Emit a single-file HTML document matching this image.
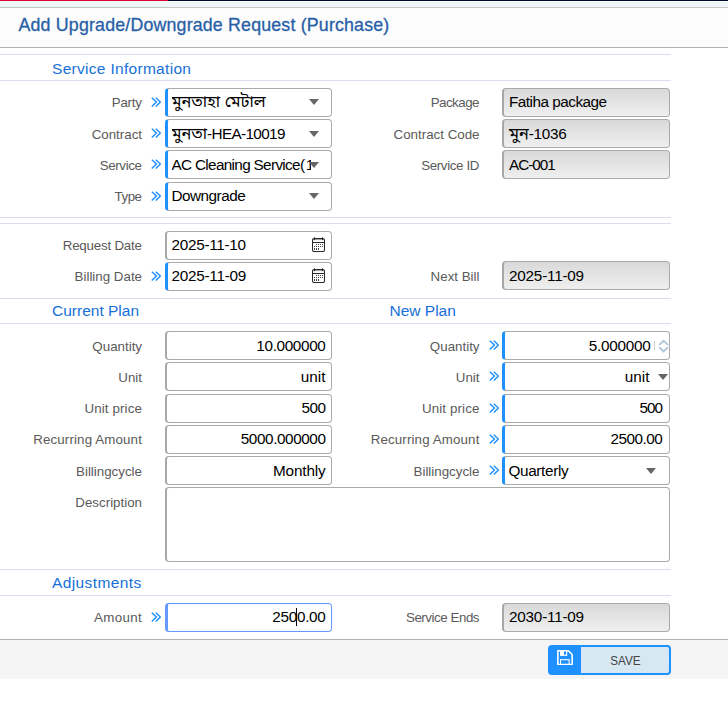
<!DOCTYPE html>
<html lang="en"><head><meta charset="utf-8"><title>Add Upgrade/Downgrade Request (Purchase)</title>
<style>
*{box-sizing:border-box;margin:0;padding:0}
html,body{width:728px;height:721px;background:#fff;overflow:hidden}
body{position:relative;font-family:"Liberation Sans", "Noto Sans Bengali", "FreeSans", sans-serif;color:#000}
.abs{position:absolute}
.hl{position:absolute;left:0;width:671px;height:1px;background:#dcdcf0}
.lbl{position:absolute;font-size:13.33px;color:#5a5a5a;text-align:right;white-space:nowrap;height:28.75px;line-height:28.75px}
.lbl.l{left:0;width:142px}
.lbl.r{left:340px;width:139.5px}
.sec{position:absolute;font-size:15.5px;color:#1670d8;white-space:nowrap;line-height:20px;height:20px}
.box{position:absolute;height:29px;border:1px solid #aaa;border-radius:3.75px;background:#fff;font-size:15.3px;line-height:25.6px;white-space:nowrap;overflow:hidden;padding:0 5.5px 0 4.5px;border-left:2px solid #a8a8a8}
.box.l{left:165px;width:167px}
.box.r{left:502px;width:168px}
.box.req{border-left:3px solid #1e90ff;padding-left:3.5px}
.box.ro{background:linear-gradient(#d9d9d9,#efefef);padding-left:5px}
.box.num{text-align:right}
.box.r.num{padding-right:6.8px}
.box.focus{border-color:#6699ff;border-left-color:#6699ff}
.chev{position:absolute;width:10.2px;height:10.2px}
.tri{position:absolute;width:0;height:0;border-left:5.3px solid transparent;border-right:5.3px solid transparent;border-top:6px solid #666}
.bn{font-family:"Liberation Sans","Noto Sans Bengali","Lohit Bengali","FreeSans",sans-serif;font-size:16.3px;line-height:1;position:relative;top:-0.5px}
.sel{display:block;width:139.5px;overflow:hidden;white-space:nowrap}
.cal{position:absolute;width:13px;height:15px}
</style></head>
<body>
<div class="abs" style="left:0;top:0;width:168px;height:1px;background:#e00030"></div>
<div class="abs" style="left:168px;top:0;width:560px;height:1px;background:#000a2a"></div>
<div class="abs" style="left:0;top:1px;width:728px;height:6px;background:#eef6f9"></div>
<div class="abs" style="left:168px;top:1px;width:560px;height:1px;background:#fdfeff"></div>
<div class="abs" style="left:0;top:7px;width:728px;height:1px;background:#c6c6c6"></div>
<div class="abs" style="left:0;top:8px;width:728px;height:39px;background:#fcfcfc"></div>
<div class="abs" style="left:18.5px;top:12px;font-size:17.8px;letter-spacing:0.18px;line-height:26px;color:#2760a6;white-space:nowrap;-webkit-text-stroke:0.3px #2760a6" id="title">Add Upgrade/Downgrade Request (Purchase)</div>
<div class="abs" style="left:0;top:47px;width:728px;height:1px;background:#b2b2b2"></div>
<div class="hl" style="top:54px"></div>
<div class="hl" style="top:80px"></div>
<div class="hl" style="top:217px"></div>
<div class="hl" style="top:223px"></div>
<div class="hl" style="top:298px"></div>
<div class="hl" style="top:323px"></div>
<div class="hl" style="top:569px"></div>
<div class="hl" style="top:595px"></div>
<div class="sec" id="s1" style="left:52px;top:58.5px;letter-spacing:0.3px">Service Information</div>
<div class="sec" id="s2" style="left:52px;top:301.3px;letter-spacing:0px">Current Plan</div>
<div class="sec" id="s3" style="left:389.5px;top:301.3px;letter-spacing:0px">New Plan</div>
<div class="sec" id="s4" style="left:52px;top:573.3px;letter-spacing:0.4px">Adjustments</div>
<div class="lbl l" style="top:89.0px;letter-spacing:-0.2px;padding-right:0.2px">Party</div>
<svg class="chev" style="left:151.0px;top:96.5px" viewBox="0 0 10.2 10.2"><path d="M0.8 0.7 L5.4 5.1 L0.8 9.5 M4.8 0.7 L9.4 5.1 L4.8 9.5" fill="none" stroke="#1e90ff" stroke-width="1.45"/></svg>
<div class="box l req" style="top:88px"><span class="sel"><span class="bn">মুনতাহা মেটাল</span></span></div>
<div class="tri" style="left:308.7px;top:99.4px"></div>
<div class="lbl l" style="top:121.0px;letter-spacing:0px;padding-right:0px">Contract</div>
<svg class="chev" style="left:151.0px;top:127.5px" viewBox="0 0 10.2 10.2"><path d="M0.8 0.7 L5.4 5.1 L0.8 9.5 M4.8 0.7 L9.4 5.1 L4.8 9.5" fill="none" stroke="#1e90ff" stroke-width="1.45"/></svg>
<div class="box l req" style="padding-top:1px;top:119px"><span class="sel"><span class="bn">মুনতা</span><span style="letter-spacing:-0.65px">-HEA-10019</span></span></div>
<div class="tri" style="left:308.7px;top:131.20000000000002px"></div>
<div class="lbl l" style="top:152.0px;letter-spacing:-0.35px;padding-right:0.35px">Service</div>
<svg class="chev" style="left:151.0px;top:158.5px" viewBox="0 0 10.2 10.2"><path d="M0.8 0.7 L5.4 5.1 L0.8 9.5 M4.8 0.7 L9.4 5.1 L4.8 9.5" fill="none" stroke="#1e90ff" stroke-width="1.45"/></svg>
<div class="box l req" style="padding-top:1px;top:150px"><span class="sel"><span style="letter-spacing:-0.67px">AC Cleaning Service(</span><span style="margin-left:1.5px">1</span></span></div>
<div class="tri" style="left:308.7px;top:162.20000000000002px"></div>
<div class="lbl l" style="top:183.0px;letter-spacing:-0.5px;padding-right:0.5px">Type</div>
<svg class="chev" style="left:151.0px;top:190.5px" viewBox="0 0 10.2 10.2"><path d="M0.8 0.7 L5.4 5.1 L0.8 9.5 M4.8 0.7 L9.4 5.1 L4.8 9.5" fill="none" stroke="#1e90ff" stroke-width="1.45"/></svg>
<div class="box l req" style="top:182px"><span style="letter-spacing:-0.5px">Downgrade</span></div>
<div class="tri" style="left:308.7px;top:193.4px"></div>
<div class="lbl r" style="top:89.0px;letter-spacing:-0.5px;padding-right:0.5px">Package</div>
<div class="box r ro" style="top:88px"><span style="letter-spacing:-0.5px">Fatiha package</span></div>
<div class="lbl r" style="top:121.0px;letter-spacing:0px;padding-right:0px">Contract Code</div>
<div class="box r ro" style="padding-top:1px;top:119px"><span class="bn">মুন</span><span style="letter-spacing:-0.3px">-1036</span></div>
<div class="lbl r" style="top:152.0px;letter-spacing:-0.35px;padding-right:0.35px">Service ID</div>
<div class="box r ro" style="padding-top:1px;top:150px"><span style="letter-spacing:-1.0px">AC-001</span></div>
<div class="lbl l" style="top:232.0px;letter-spacing:-0.2px;padding-right:0.2px">Request Date</div>
<div class="box l " style="top:231px"><span style="letter-spacing:-0.28px">2025-11-10</span></div>
<svg class="cal" style="left:312px;top:237px" viewBox="0 0 13 15"><rect x="0.5" y="1.5" width="12" height="13" rx="1.6" fill="none" stroke="#2a2a2a" stroke-width="1.05"/><path d="M0.5 5.5H12.5" stroke="#2a2a2a" stroke-width="1"/><path d="M1 2.6H12" stroke="#2a2a2a" stroke-width="0.5"/><g fill="#222"><rect x="2" y="0" width="1" height="3.2" rx="0.4"/><rect x="10" y="0" width="1" height="3.2" rx="0.4"/></g><g fill="#444"><rect x="4" y="7" width="1" height="1"/><rect x="6" y="7" width="1" height="1"/><rect x="8" y="7" width="1" height="1"/><rect x="10" y="7" width="1" height="1"/><rect x="2" y="9" width="1" height="1"/><rect x="4" y="9" width="1" height="1"/><rect x="6" y="9" width="1" height="1"/><rect x="8" y="9" width="1" height="1"/><rect x="10" y="9" width="1" height="1"/><rect x="2" y="11" width="1" height="2"/><rect x="4" y="11" width="1" height="2"/><rect x="6" y="11" width="1" height="2"/></g></svg>
<div class="lbl l" style="top:263.0px;letter-spacing:0px;padding-right:0px">Billing Date</div>
<svg class="chev" style="left:151.0px;top:270.5px" viewBox="0 0 10.2 10.2"><path d="M0.8 0.7 L5.4 5.1 L0.8 9.5 M4.8 0.7 L9.4 5.1 L4.8 9.5" fill="none" stroke="#1e90ff" stroke-width="1.45"/></svg>
<div class="box l req" style="top:262px"><span style="letter-spacing:-0.25px">2025-11-09</span></div>
<svg class="cal" style="left:312px;top:268px" viewBox="0 0 13 15"><rect x="0.5" y="1.5" width="12" height="13" rx="1.6" fill="none" stroke="#2a2a2a" stroke-width="1.05"/><path d="M0.5 5.5H12.5" stroke="#2a2a2a" stroke-width="1"/><path d="M1 2.6H12" stroke="#2a2a2a" stroke-width="0.5"/><g fill="#222"><rect x="2" y="0" width="1" height="3.2" rx="0.4"/><rect x="10" y="0" width="1" height="3.2" rx="0.4"/></g><g fill="#444"><rect x="4" y="7" width="1" height="1"/><rect x="6" y="7" width="1" height="1"/><rect x="8" y="7" width="1" height="1"/><rect x="10" y="7" width="1" height="1"/><rect x="2" y="9" width="1" height="1"/><rect x="4" y="9" width="1" height="1"/><rect x="6" y="9" width="1" height="1"/><rect x="8" y="9" width="1" height="1"/><rect x="10" y="9" width="1" height="1"/><rect x="2" y="11" width="1" height="2"/><rect x="4" y="11" width="1" height="2"/><rect x="6" y="11" width="1" height="2"/></g></svg>
<div class="lbl r" style="top:263.0px;letter-spacing:0px;padding-right:0px">Next Bill</div>
<div class="box r ro" style="padding-top:1px;top:261px"><span style="letter-spacing:-0.22px">2025-11-09</span></div>
<div class="lbl l" style="top:333.0px;letter-spacing:0px;padding-right:0px">Quantity</div>
<div class="box l num" style="padding-top:1px;top:331px"><span style="letter-spacing:-0.35px">10.000000</span></div>
<div class="lbl r" style="top:333.0px;letter-spacing:0px;padding-right:0px">Quantity</div>
<svg class="chev" style="left:488.5px;top:339.5px" viewBox="0 0 10.2 10.2"><path d="M0.8 0.7 L5.4 5.1 L0.8 9.5 M4.8 0.7 L9.4 5.1 L4.8 9.5" fill="none" stroke="#1e90ff" stroke-width="1.45"/></svg>
<div class="lbl l" style="top:364.0px;letter-spacing:0px;padding-right:0px">Unit</div>
<div class="box l num" style="padding-top:1px;top:362px">unit</div>
<div class="lbl r" style="top:364.0px;letter-spacing:0px;padding-right:0px">Unit</div>
<svg class="chev" style="left:488.5px;top:370.5px" viewBox="0 0 10.2 10.2"><path d="M0.8 0.7 L5.4 5.1 L0.8 9.5 M4.8 0.7 L9.4 5.1 L4.8 9.5" fill="none" stroke="#1e90ff" stroke-width="1.45"/></svg>
<div class="lbl l" style="top:395.0px;letter-spacing:0.12px;padding-right:0px">Unit price</div>
<div class="box l num" style="top:394px"><span style="letter-spacing:-0.5px">500</span></div>
<div class="lbl r" style="top:395.0px;letter-spacing:0.12px;padding-right:0px">Unit price</div>
<svg class="chev" style="left:488.5px;top:402.5px" viewBox="0 0 10.2 10.2"><path d="M0.8 0.7 L5.4 5.1 L0.8 9.5 M4.8 0.7 L9.4 5.1 L4.8 9.5" fill="none" stroke="#1e90ff" stroke-width="1.45"/></svg>
<div class="lbl l" style="top:426.0px;letter-spacing:0.13px;padding-right:0px">Recurring Amount</div>
<div class="box l num" style="top:425px"><span style="letter-spacing:-0.42px">5000.000000</span></div>
<div class="lbl r" style="top:426.0px;letter-spacing:0.13px;padding-right:0px">Recurring Amount</div>
<svg class="chev" style="left:488.5px;top:433.5px" viewBox="0 0 10.2 10.2"><path d="M0.8 0.7 L5.4 5.1 L0.8 9.5 M4.8 0.7 L9.4 5.1 L4.8 9.5" fill="none" stroke="#1e90ff" stroke-width="1.45"/></svg>
<div class="lbl l" style="top:458.0px;letter-spacing:0px;padding-right:0px">Billingcycle</div>
<div class="box l num" style="padding-top:1px;top:456px"><span style="letter-spacing:-0.15px">Monthly</span></div>
<div class="lbl r" style="top:458.0px;letter-spacing:0px;padding-right:0px">Billingcycle</div>
<svg class="chev" style="left:488.5px;top:464.5px" viewBox="0 0 10.2 10.2"><path d="M0.8 0.7 L5.4 5.1 L0.8 9.5 M4.8 0.7 L9.4 5.1 L4.8 9.5" fill="none" stroke="#1e90ff" stroke-width="1.45"/></svg>
<div class="box r req num" style="padding-right:18.5px;padding-top:1px;top:331px"><span style="letter-spacing:-0.27px">5.000000</span></div>
<div class="abs" style="left:654px;top:341px;width:1px;height:9px;background:#ccc"></div>
<svg class="abs" style="left:657.5px;top:339px;width:11px;height:14px" viewBox="0 0 11 14"><path d="M1.2 5.9 L5.6 1.7 L10 5.9 M1.2 8.3 L5.6 12.5 L10 8.3" fill="none" stroke="#b3c6d8" stroke-width="1.9"/></svg>
<div class="box r req num" style="padding-right:19.5px;padding-top:1px;top:362px">unit</div>
<div class="abs" style="left:657px;top:373.5px;width:12px;height:8px;overflow:hidden"><div class="tri" style="left:1px;top:0"></div></div>
<div class="box r req num" style="top:394px"><span style="letter-spacing:-0.9px">500</span></div>
<div class="box r req num" style="top:425px"><span style="letter-spacing:-0.5px">2500.00</span></div>
<div class="box r req" style="padding-top:1px;top:456px"><span style="letter-spacing:-0.35px">Quarterly</span></div>
<div class="tri" style="left:646.4000000000001px;top:467.9px"></div>
<div class="lbl l" style="top:489.0px;letter-spacing:0px;padding-right:0px">Description</div>
<div class="box" style="left:165px;top:487px;width:505px;height:75px"></div>
<div class="lbl l" style="top:604.0px;letter-spacing:0.33px;padding-right:0px">Amount</div>
<svg class="chev" style="left:151.0px;top:611.5px" viewBox="0 0 10.2 10.2"><path d="M0.8 0.7 L5.4 5.1 L0.8 9.5 M4.8 0.7 L9.4 5.1 L4.8 9.5" fill="none" stroke="#1e90ff" stroke-width="1.45"/></svg>
<div class="box l req num focus" style="top:603px"><span style="letter-spacing:-0.3px">2500.00</span></div>
<div class="abs" style="left:296px;top:608px;width:1px;height:17.5px;background:#000"></div>
<div class="lbl r" style="top:604.0px;letter-spacing:-0.45px;padding-right:0.45px">Service Ends</div>
<div class="box r ro" style="top:603px"><span style="letter-spacing:-0.22px">2030-11-09</span></div>
<div class="abs" style="left:0;top:639px;width:728px;height:1px;background:#b4b4b4"></div>
<div class="abs" style="left:0;top:640px;width:728px;height:39px;background:#f5f5f5"></div>
<div class="abs" style="left:548px;top:645px;width:122.5px;height:30px;border-radius:4px;background:#1e90ff;overflow:hidden"><div class="abs" style="left:33px;top:2px;right:2px;bottom:2px;background:#d8e8f3;border-radius:0 2px 2px 0"></div><div class="abs" id="save" style="left:33.3px;top:0;right:1.5px;height:30px;line-height:31.5px;text-align:center;font-size:13.4px;color:#444"><span style="display:inline-block;transform:scaleX(0.875);transform-origin:50% 50%">SAVE</span></div><svg class="abs" style="left:9px;top:5px;width:16px;height:15.4px" viewBox="0 0 16 15.4"><path d="M0.85 0.8 H11.4 L15.15 4.5 V14.5 H0.85 Z" fill="none" stroke="#fff" stroke-width="1.6" stroke-linejoin="round"/><rect x="3" y="0.8" width="7.2" height="5.1" fill="#fff"/><rect x="6.9" y="1.4" width="2.1" height="3.3" fill="#1e90ff"/><rect x="3.5" y="9.7" width="8.6" height="5" fill="none" stroke="#fff" stroke-width="1.05"/></svg></div>
</body></html>
